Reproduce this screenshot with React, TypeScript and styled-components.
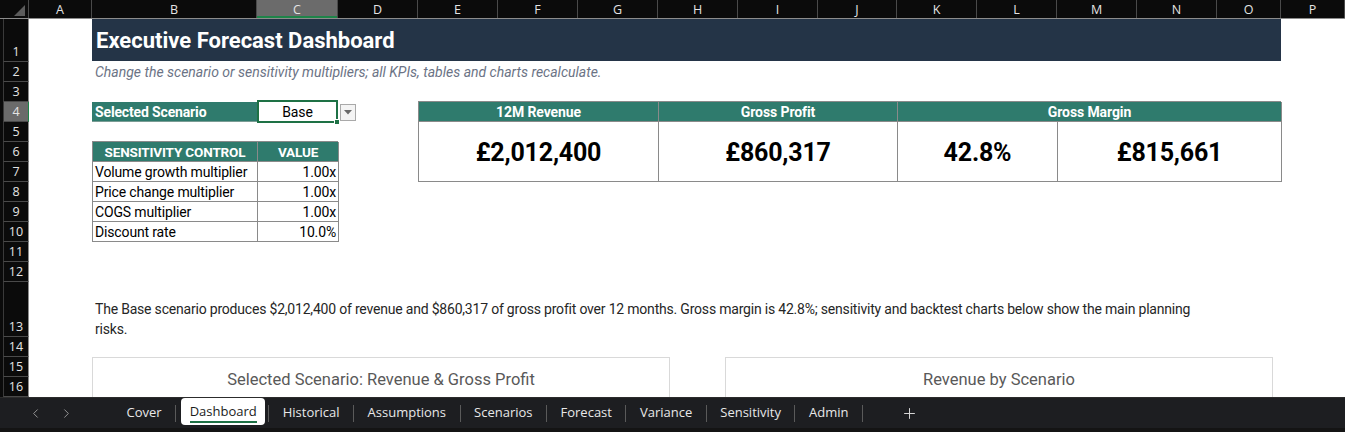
import React from "react";
import styled, { createGlobalStyle } from "styled-components";
import { ChevronLeft, ChevronRight, Plus } from "lucide-react";

const NARROW = `Roboto, "Liberation Sans", sans-serif`;
const UI = `"Open Sans", "Noto Sans", sans-serif`;

const TEAL = "#2f7b6d";
const NAVY = "#243447";
const GRID_LINE = "#8a8a8a";

const COLS: [string, number][] = [
  ["A", 63], ["B", 165], ["C", 81], ["D", 80], ["E", 80], ["F", 80], ["G", 80],
  ["H", 80], ["I", 80], ["J", 79], ["K", 80], ["L", 80], ["M", 80], ["N", 80],
  ["O", 64], ["P", 64],
];
const ROW_H = [43, 20, 20, 20, 20, 20, 20, 20, 20, 20, 20, 20, 55, 20, 20, 20];

const Global = createGlobalStyle`
  html, body { margin: 0; padding: 0; background: #ffffff; overflow: hidden; }
  #root { width: 1345px; height: 432px; }
  * { box-sizing: border-box; }
`;

const Frame = styled.div`
  width: 1345px;
  height: 432px;
  display: flex;
  flex-direction: column;
  overflow: hidden;
  background: #ffffff;
`;

/* ---------- column header ---------- */
const ColHeaderBar = styled.div`
  display: flex;
  height: 19px;
  flex: none;
  background: #0b0b0b;
  border-bottom: 1px solid #8c8c8c;
`;

const Corner = styled.div`
  width: 29px;
  flex: none;
  display: flex;
  align-items: flex-end;
  justify-content: flex-end;
  padding: 0 3px 2px 0;
  border-right: 1px solid #4a4a4a;
`;

const ColHead = styled.div<{ $w: number; $active?: boolean }>`
  width: ${(p) => p.$w}px;
  flex: none;
  display: flex;
  align-items: center;
  justify-content: center;
  font-family: ${UI};
  font-size: 12.5px;
  color: #e4e4e4;
  border-right: 1px solid #4a4a4a;
  background: ${(p) => (p.$active ? "#6b6b6b" : "transparent")};
  box-shadow: ${(p) => (p.$active ? "inset 0 -2px 0 #1e8449" : "none")};
`;

/* ---------- body ---------- */
const SheetBody = styled.div`
  display: flex;
  flex: 1;
  min-height: 0;
  overflow: hidden;
`;

const RowHeaderCol = styled.div`
  width: 29px;
  flex: none;
  display: flex;
  flex-direction: column;
  background: #0b0b0b;
  border-left: 3px solid #0b0b0b;
`;

const RowHead = styled.div<{ $h: number; $active?: boolean }>`
  height: ${(p) => p.$h}px;
  flex: none;
  display: flex;
  align-items: flex-end;
  justify-content: center;
  padding-bottom: 2px;
  font-family: ${UI};
  font-size: 12.5px;
  line-height: 15px;
  color: #e4e4e4;
  border-left: 1px solid #3a3a3a;
  border-bottom: 1px solid #4a4a4a;
  border-right: 1px solid ${(p) => (p.$active ? "#1e8449" : "#8c8c8c")};
  background: ${(p) => (p.$active ? "#6b6b6b" : "#0b0b0b")};
`;

const Sheet = styled.div`
  flex: 1;
  display: grid;
  grid-template-columns: ${COLS.map((c) => `${c[1]}px`).join(" ")};
  grid-template-rows: ${ROW_H.map((h) => `${h}px`).join(" ")};
  overflow: hidden;
  font-family: ${NARROW};
  font-size: 14px;
  letter-spacing: -0.15px;
  color: #000;
`;

const Cell = styled.div<{ $col: string; $row: string }>`
  grid-column: ${(p) => p.$col};
  grid-row: ${(p) => p.$row};
  min-width: 0;
`;

const TitleBar = styled(Cell)`
  background: ${NAVY};
  color: #ffffff;
  font-weight: 700;
  font-size: 22px;
  letter-spacing: 0;
  display: flex;
  align-items: center;
  padding: 1px 0 0 4px;
  margin-bottom: 1px;
`;

const Subtitle = styled(Cell)`
  font-style: italic;
  color: #6b7385;
  font-size: 14px;
  letter-spacing: 0;
  display: flex;
  align-items: center;
  padding-left: 3px;
`;

const ScenarioLabel = styled(Cell)`
  background: ${TEAL};
  color: #ffffff;
  font-weight: 700;
  display: flex;
  align-items: center;
  padding-left: 3px;
  border-bottom: 1px solid #7a9c94;
`;

const ScenarioValue = styled(Cell)`
  position: relative;
  display: flex;
  align-items: center;
  justify-content: center;
  margin: -2px 0 -1px 0;
  border: 2px solid #1e7145;
`;

const FillHandle = styled.span`
  position: absolute;
  right: -4px;
  bottom: -4px;
  width: 6px;
  height: 6px;
  background: #1e7145;
  border: 1px solid #ffffff;
`;

const DropButton = styled(Cell)`
  justify-self: start;
  align-self: center;
  margin-left: 2px;
  width: 16px;
  height: 17px;
  background: #f4f4f4;
  border: 1px solid #a9a9a9;
  display: flex;
  align-items: center;
  justify-content: center;
`;

/* ---------- sensitivity table ---------- */
const SensTable = styled(Cell)`
  display: grid;
  grid-template-columns: 165px 81px;
  grid-auto-rows: 20px;
  border-top: 1px solid ${GRID_LINE};
  border-left: 1px solid ${GRID_LINE};
  margin-top: -1px;
`;

const TCell = styled.div<{ $head?: boolean; $align?: string }>`
  border-right: 1px solid ${GRID_LINE};
  border-bottom: 1px solid ${GRID_LINE};
  display: flex;
  align-items: center;
  justify-content: ${(p) => p.$align || "flex-start"};
  padding: 0 2px;
  white-space: nowrap;
  overflow: hidden;
  background: ${(p) => (p.$head ? TEAL : "#ffffff")};
  color: ${(p) => (p.$head ? "#ffffff" : "#000000")};
  font-weight: ${(p) => (p.$head ? 700 : 400)};
  font-size: ${(p) => (p.$head ? "13.5px" : "14px")};
`;

/* ---------- KPI block ---------- */
const KpiBlock = styled(Cell)`
  display: grid;
  grid-template-columns: 240px 239px 160px 224px;
  grid-template-rows: 20px 60px;
  border-top: 1px solid ${GRID_LINE};
  border-left: 1px solid ${GRID_LINE};
  margin-top: -1px;
`;

const KpiHead = styled.div<{ $span: number }>`
  grid-column: span ${(p) => p.$span};
  background: ${TEAL};
  color: #ffffff;
  font-weight: 700;
  font-size: 14px;
  letter-spacing: -0.1px;
  display: flex;
  align-items: center;
  justify-content: center;
  border-right: 1px solid ${GRID_LINE};
  border-bottom: 1px solid ${GRID_LINE};
`;

const KpiValue = styled.div`
  display: flex;
  align-items: center;
  justify-content: center;
  font-weight: 700;
  font-size: 25px;
  letter-spacing: -0.2px;
  padding-top: 2px;
  border-right: 1px solid ${GRID_LINE};
  border-bottom: 1px solid ${GRID_LINE};
`;

/* ---------- narrative & charts ---------- */
const Narrative = styled(Cell)`
  align-self: end;
  line-height: 20px;
  font-size: 14px;
  letter-spacing: -0.2px;
  color: #262626;
  padding: 0 10px 0 3px;
  margin-bottom: -2px;
`;

const ChartRow = styled(Cell)`
  display: flex;
  gap: 55px;
  align-items: flex-start;
`;

const ChartCard = styled.div<{ $w: number }>`
  width: ${(p) => p.$w}px;
  height: 300px;
  flex: none;
  border: 1px solid #d9d9d9;
  background: #ffffff;
  display: flex;
  flex-direction: column;
  align-items: center;
  padding-top: 12px;
`;

const ChartTitle = styled.div`
  font-size: 16.5px;
  line-height: 20px;
  letter-spacing: 0;
  color: #595959;
`;

/* ---------- tab bar ---------- */
const TabBar = styled.div`
  height: 35px;
  flex: none;
  display: flex;
  align-items: flex-start;
  background: #1d1e21;
  border-top: 1px solid #2c2c2c;
  border-bottom: 4px solid #141414;
  font-family: ${UI};
  font-size: 13px;
  color: #e8e8e8;
`;

const NavArrows = styled.div`
  display: flex;
  align-items: center;
  gap: 16px;
  width: 113px;
  height: 30px;
  padding-left: 28px;
  color: #9a9a9a;
`;

const Tabs = styled.div`
  display: flex;
  align-items: center;
  height: 30px;
`;

const Tab = styled.div<{ $active?: boolean }>`
  height: ${(p) => (p.$active ? "27px" : "30px")};
  align-self: flex-start;
  display: flex;
  align-items: center;
  padding: 0 ${(p) => (p.$active ? "8.5px" : "13.5px")};
  background: ${(p) => (p.$active ? "#ffffff" : "transparent")};
  color: ${(p) => (p.$active ? "#1b1b1b" : "#e8e8e8")};
  border-radius: ${(p) => (p.$active ? "4px" : "0")};
  margin: ${(p) => (p.$active ? "0 3px 0 5px" : "0")};
  white-space: nowrap;
`;

const TabLabel = styled.span<{ $active?: boolean }>`
  border-bottom: 2px solid ${(p) => (p.$active ? "#1e7145" : "transparent")};
  padding: 2px 0 1px;
  line-height: 17px;
`;

const Sep = styled.div`
  width: 1px;
  height: 17px;
  background: #5a5a5a;
  flex: none;
`;

const AddTab = styled.div`
  display: flex;
  align-items: center;
  height: 30px;
  padding-left: 38px;
  color: #d8d8d8;
`;

const TABS = ["Cover", "Dashboard", "Historical", "Assumptions", "Scenarios", "Forecast", "Variance", "Sensitivity", "Admin"];

const SENS: [string, string][] = [
  ["Volume growth multiplier", "1.00x"],
  ["Price change multiplier", "1.00x"],
  ["COGS multiplier", "1.00x"],
  ["Discount rate", "10.0%"],
];

export default function App() {
  return (
    <>
      <Global />
      <Frame>
        <ColHeaderBar>
          <Corner>
            <svg width="11" height="11" viewBox="0 0 11 11">
              <polygon points="11,0 11,11 0,11" fill="#5c5c5c" />
            </svg>
          </Corner>
          {COLS.map(([l, w]) => (
            <ColHead key={l} $w={w} $active={l === "C"}>{l}</ColHead>
          ))}
        </ColHeaderBar>

        <SheetBody>
          <RowHeaderCol>
            {ROW_H.map((h, i) => (
              <RowHead key={i} $h={h} $active={i === 3}>{i + 1}</RowHead>
            ))}
          </RowHeaderCol>

          <Sheet>
            <TitleBar $col="2 / 16" $row="1">Executive Forecast Dashboard</TitleBar>
            <Subtitle $col="2 / 16" $row="2">
              Change the scenario or sensitivity multipliers; all KPIs, tables and charts recalculate.
            </Subtitle>

            <ScenarioLabel $col="2" $row="4">Selected Scenario</ScenarioLabel>
            <ScenarioValue $col="3" $row="4">
              Base
              <FillHandle />
            </ScenarioValue>
            <DropButton $col="4" $row="4">
              <svg width="8" height="5" viewBox="0 0 8 5">
                <polygon points="0,0 8,0 4,4.5" fill="#6a6a6a" />
              </svg>
            </DropButton>

            <SensTable $col="2 / 4" $row="6 / 11">
              <TCell $head $align="center">SENSITIVITY CONTROL</TCell>
              <TCell $head $align="center">VALUE</TCell>
              {SENS.map(([k, v]) => (
                <React.Fragment key={k}>
                  <TCell>{k}</TCell>
                  <TCell $align="flex-end">{v}</TCell>
                </React.Fragment>
              ))}
            </SensTable>

            <KpiBlock $col="5 / 16" $row="4 / 8">
              <KpiHead $span={1}>12M Revenue</KpiHead>
              <KpiHead $span={1}>Gross Profit</KpiHead>
              <KpiHead $span={2}>Gross Margin</KpiHead>
              <KpiValue>£2,012,400</KpiValue>
              <KpiValue>£860,317</KpiValue>
              <KpiValue>42.8%</KpiValue>
              <KpiValue>£815,661</KpiValue>
            </KpiBlock>

            <Narrative $col="2 / 15" $row="13">
              The Base scenario produces $2,012,400 of revenue and $860,317 of gross profit over 12 months. Gross margin is 42.8%; sensitivity and backtest charts below show the main planning risks.
            </Narrative>

            <ChartRow $col="2 / 17" $row="15 / 17">
              <ChartCard $w={578}>
                <ChartTitle>Selected Scenario: Revenue &amp; Gross Profit</ChartTitle>
              </ChartCard>
              <ChartCard $w={548}>
                <ChartTitle>Revenue by Scenario</ChartTitle>
              </ChartCard>
            </ChartRow>
          </Sheet>
        </SheetBody>

        <TabBar>
          <NavArrows>
            <ChevronLeft size={15} strokeWidth={1.5} />
            <ChevronRight size={15} strokeWidth={1.5} />
          </NavArrows>
          <Tabs>
            {TABS.map((t) => (
              <React.Fragment key={t}>
                <Tab $active={t === "Dashboard"}>
                  <TabLabel $active={t === "Dashboard"}>{t}</TabLabel>
                </Tab>
                <Sep />
              </React.Fragment>
            ))}
          </Tabs>
          <AddTab>
            <Plus size={17} strokeWidth={1.4} />
          </AddTab>
        </TabBar>
      </Frame>
    </>
  );
}
